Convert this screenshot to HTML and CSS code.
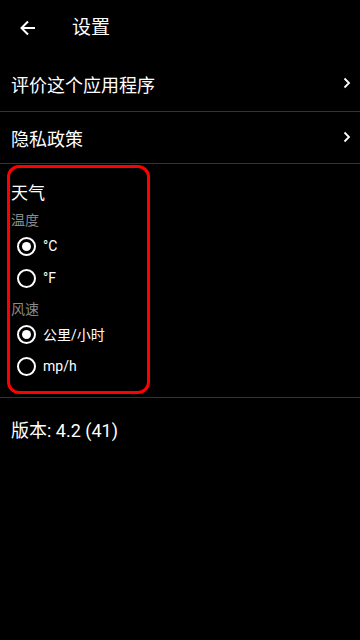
FILE: index.html
```
<!DOCTYPE html>
<html>
<head>
  <meta charset="utf-8">
  <title>设置</title>
  <link rel="stylesheet" href="styles.css">
</head>
<body>
  <div class="toolbar">
    <svg class="back" width="16" height="16" viewBox="0 0 16 16">
      <path d="M15 8H1.5M8 1.5L1.5 8 8 14.5" fill="none" stroke="#fff" stroke-width="2"/>
    </svg>
    <h1>设置</h1>
  </div>

  <div class="row row-first">
    <span>评价这个应用程序</span>
    <svg class="chevron" width="8" height="12" viewBox="0 0 8 12">
      <path d="M1.5 1.5L6 6 1.5 10.5" fill="none" stroke="#fff" stroke-width="1.8"/>
    </svg>
  </div>
  <div class="row">
    <span>隐私政策</span>
    <svg class="chevron" width="8" height="12" viewBox="0 0 8 12">
      <path d="M1.5 1.5L6 6 1.5 10.5" fill="none" stroke="#fff" stroke-width="1.8"/>
    </svg>
  </div>

  <div class="weather">
    <div class="weather-box">
      <div class="group-title">天气</div>
      <div class="sub-title">温度</div>
      <div class="radio checked"><span class="dot"></span>°C</div>
      <div class="radio"><span class="dot"></span>°F</div>
      <div class="sub-title sub-second">风速</div>
      <div class="radio checked"><span class="dot"></span>公里/小时</div>
      <div class="radio"><span class="dot"></span>mp/h</div>
    </div>
  </div>

  <div class="version">版本: 4.2 (41)</div>
</body>
</html>
```

FILE: styles.css
```
body {
    margin: 0;
    background-color: #000;
    color: #fff;
    font-family: Roboto, "Noto Sans CJK SC", sans-serif;
    width: 360px;
    height: 640px;
    overflow: hidden;
}

/* Top bar */
.toolbar {
    height: 56px;
    display: flex;
    align-items: center;
}

.toolbar .back {
    margin-left: 20px;
}

.toolbar h1 {
    margin: 0 0 0 36px;
    font-size: 19px;
    font-weight: normal;
    line-height: 24px;
}

/* Settings rows */
.row {
    height: 51px;
    border-bottom: 1px solid #333;
    display: flex;
    align-items: center;
    justify-content: space-between;
    padding: 0 9px 0 11px;
    font-size: 18px;
}

.row-first {
    height: 55px;
}

.row .chevron {
    margin-top: -2px;
}

/* Weather section with red outline */
.weather {
    padding: 1px 0 3px 7px;
    border-bottom: 1px solid #333;
}

.weather-box {
    width: 136px;
    height: 223px;
    border: 3px solid #f00;
    border-radius: 12px;
    padding-left: 1px;
}

.group-title {
    margin-top: 15px;
    font-size: 17px;
    line-height: 20px;
}

.sub-title {
    margin-top: 7px;
    font-size: 14px;
    line-height: 20px;
    color: #8a8a8a;
}

.sub-second {
    margin-top: 6px;
    line-height: 18px;
}

.radio {
    height: 32px;
    display: flex;
    align-items: center;
    font-size: 14px;
}

.radio .dot {
    width: 15px;
    height: 15px;
    border: 2px solid #fff;
    border-radius: 50%;
    margin: 0 7px 0 6px;
    display: flex;
    align-items: center;
    justify-content: center;
}

.radio.checked .dot::after {
    content: "";
    width: 9px;
    height: 9px;
    border-radius: 50%;
    background-color: #fff;
}

/* Footer version */
.version {
    padding: 23px 11px 0;
    font-size: 18px;
    line-height: 20px;
}
```
